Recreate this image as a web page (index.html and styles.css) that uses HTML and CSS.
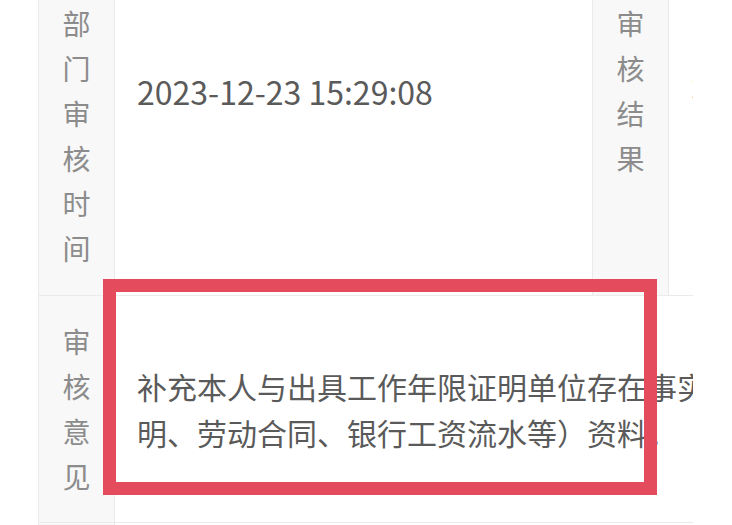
FILE: index.html
```html
<!DOCTYPE html>
<html lang="zh-CN">
<head>
<meta charset="utf-8">
<title>审核详情</title>
<link rel="stylesheet" href="styles.css">
</head>
<body>
<div class="screen">
  <table class="detail">
    <colgroup>
      <col class="c-label">
      <col class="c-value">
      <col class="c-label">
      <col class="c-value2">
    </colgroup>
    <tr class="row-time">
      <th class="label"><span class="vtext">部门审核时间</span></th>
      <td class="value value-top">2023-12-23 15:29:08</td>
      <th class="label"><span class="vtext">审核结果</span></th>
      <td class="value value-top">不通过</td>
    </tr>
    <tr class="row-opinion">
      <th class="label"><span class="vtext">审核意见</span></th>
      <td class="value opinion-cell" colspan="3"><div class="opinion">补充本人与出具工作年限证明单位存在事实劳动关系（在职证明、劳动合同、银行工资流水等）资料。</div></td>
    </tr>
    <tr class="row-next">
      <th class="label"></th>
      <td class="value" colspan="3"></td>
    </tr>
  </table>
  <div class="mark"></div>
</div>
</body>
</html>
```
FILE: styles.css
```css
html, body {
  margin: 0;
  padding: 0;
  background: #ffffff;
}

body {
  font-family: "Noto Sans CJK SC", "Noto Sans", sans-serif;
}

.screen {
  position: relative;
  width: 693px;
  height: 525px;
  overflow: hidden;
  background: #ffffff;
}

.detail {
  margin: -20px 0 0 38px;
  width: 950px;
  table-layout: fixed;
  border-collapse: collapse;
}

.c-label { width: 76px; }
.c-value { width: 478px; }
.c-value2 { width: 320px; }

.detail th,
.detail td {
  border: 1px solid #ebebeb;
  padding: 0;
}

.detail .label {
  background: #f8f8f8;
  color: #8c8c8c;
  font-weight: 400;
  font-size: 28px;
  line-height: 45px;
  text-align: center;
  vertical-align: top;
}

.vtext {
  display: block;
  width: 1em;
  margin: 0 auto;
}

.detail .row-time .label {
  padding: 20px 0 24px;
}

.detail .value {
  color: #5a5a5a;
  background: #ffffff;
  text-align: left;
}

.detail .value-top {
  vertical-align: top;
  font-size: 32px;
  line-height: 45px;
  padding: 88px 0 0 22px;
  white-space: nowrap;
}

.detail .row-opinion .label {
  vertical-align: middle;
  padding: 23px 0;
}

.detail .opinion-cell {
  vertical-align: middle;
  padding-left: 22px;
}

.opinion {
  width: 27em;
  font-size: 30px;
  line-height: 46px;
}

.detail .row-next .label,
.detail .row-next .value {
  height: 40px;
}

.mark {
  position: absolute;
  left: 103px;
  top: 279px;
  width: 528px;
  height: 190px;
  border: 13px solid #e44b5d;
}
```
